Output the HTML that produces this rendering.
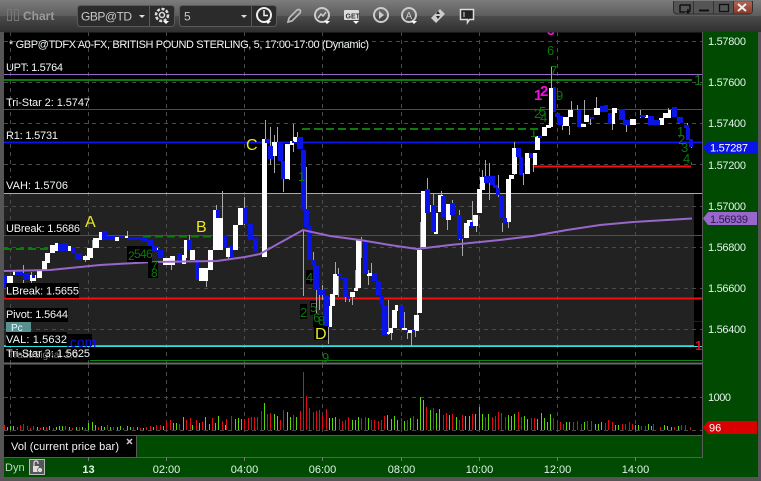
<!DOCTYPE html>
<html>
<head>
<meta charset="utf-8">
<title>Chart</title>
<style>
html,body{margin:0;padding:0;background:#555;width:761px;height:481px;overflow:hidden}
svg{display:block;position:absolute;left:0;top:0}
text{font-family:"Liberation Sans",sans-serif}
.l{font-size:11px;fill:#f2f6f6}
.a{font-size:11px;fill:#e2f4ea}
.y{font-size:16px;fill:#e8e820}
.g{font-size:13px;fill:#0a7a0a}
.m{font-size:14px;fill:#f010e0;font-weight:bold}
</style>
</head>
<body>
<svg width="761" height="481" viewBox="0 0 761 481" xmlns="http://www.w3.org/2000/svg">
<defs>
<linearGradient id="t1" x1="0" y1="0" x2="0" y2="1"><stop offset="0" stop-color="#7c7c7c"/><stop offset="1" stop-color="#5c5c5c"/></linearGradient>
<linearGradient id="t2" x1="0" y1="0" x2="0" y2="1"><stop offset="0" stop-color="#4c4c4c"/><stop offset="1" stop-color="#2f2f2f"/></linearGradient>
<linearGradient id="x" x1="0" y1="0" x2="0" y2="1"><stop offset="0" stop-color="#b5644f"/><stop offset="1" stop-color="#8a3a2a"/></linearGradient>
<clipPath id="pc"><rect x="4" y="32" width="698" height="331"/></clipPath>
</defs>

<rect width="761" height="481" fill="#555"/>
<rect width="761" height="16" fill="url(#t1)"/>
<rect y="16" width="761" height="16" fill="url(#t2)"/>

<!-- title -->
<rect x="7.5" y="9.5" width="4" height="11" fill="none" stroke="#777"/>
<rect x="14.5" y="9.5" width="4" height="11" fill="none" stroke="#777"/>
<text x="23" y="20" font-weight="bold" fill="#9a9a9a" style="font-size:12px">Chart</text>

<!-- symbol box -->
<rect x="77.5" y="5.5" width="97" height="21" rx="3" fill="#2b2b2b" stroke="#5a5a5a"/>
<path d="M149.500 6V26" stroke="#5a5a5a"/>
<text x="81" y="20.500" fill="#c8c8c8" style="font-size:12px" textLength="51">GBP@TD</text>
<path d="M139 15h6l-3 3z" fill="#ddd"/>
<g fill="none" stroke="#ddd">
<circle cx="162" cy="15" r="6" stroke-width="2.500" stroke-dasharray="3 1.600"/>
<circle cx="162" cy="15" r="2.500" stroke-width="1.500"/>
</g>
<path d="M163 21h6l-3 3z" fill="#fff"/>

<!-- interval box -->
<rect x="179.5" y="5.5" width="97" height="21" rx="3" fill="#2b2b2b" stroke="#5a5a5a"/>
<path d="M251.500 6V26" stroke="#5a5a5a"/>
<text x="184" y="20.500" fill="#c8c8c8" style="font-size:12px">5</text>
<path d="M241 15h6l-3 3z" fill="#ddd"/>
<circle cx="264" cy="15" r="7" fill="none" stroke="#eee" stroke-width="2"/>
<path d="M264 10v5.500h4" fill="none" stroke="#eee" stroke-width="1.500"/>
<path d="M265 21h6l-3 3z" fill="#fff"/>

<!-- tool icons -->
<path d="M288 22l1-4 8-8q2-1 3 0t0 3l-8 8z" fill="none" stroke="#bbb" stroke-width="1.700"/>
<circle cx="322" cy="15" r="7" fill="none" stroke="#ccc" stroke-width="2"/>
<path d="M318 18l3-4 2 2 3-4" fill="none" stroke="#ccc" stroke-width="1.500"/>
<path d="M324 21h6l-3 3z" fill="#fff"/>
<rect x="344" y="10" width="15" height="10" rx="1" fill="#ddd"/>
<text x="345.500" y="18.500" fill="#333" font-weight="bold" style="font-size:7px">GET</text>
<path d="M353 21h6l-3 3z" fill="#fff"/>
<circle cx="381" cy="15" r="7" fill="none" stroke="#ccc" stroke-width="2"/>
<path d="M379 11l5 4-5 4z" fill="#ccc"/>
<circle cx="409" cy="15" r="7" fill="none" stroke="#ccc" stroke-width="2"/>
<text x="405.500" y="19" fill="#ccc" style="font-size:10px">A</text>
<path d="M411 21h6l-3 3z" fill="#fff"/>
<path d="M431 18l9-9 5 5-9 9z" fill="#ccc"/>
<path d="M436 14l2-3 2 3zM436 16l2 3 2-3z" fill="#222"/>
<path d="M460.500 9.500h13v10h-4l-2 3v-3h-7z" fill="#222" stroke="#ddd" stroke-width="1.500"/>
<path d="M464 12v5" stroke="#ddd"/>

<!-- window buttons -->
<path d="M673.500 1v9q0 4 4 4h71q4 0 4-4V1" fill="#555" stroke="#2e2e2e"/>
<rect x="733" y="1.500" width="19" height="12" rx="2" fill="url(#x)"/>
<path d="M693.500 1v13M713.500 1v13M733.500 1v13" stroke="#333"/>
<path d="M680 5h10v5h-3M680 5v7h5" fill="none" stroke="#111" stroke-width="1.500"/>
<path d="M685 11h6l-3 3z" fill="#111"/>
<path d="M699 10.500h10" stroke="#111" stroke-width="2"/>
<rect x="719.500" y="4.500" width="9" height="7" fill="none" stroke="#111" stroke-width="1.300"/>
<path d="M738 4l8 7M746 4l-8 7" stroke="#eee" stroke-width="2"/>

<!-- plot background -->
<rect x="4" y="32" width="698" height="404" fill="#000"/>
<rect x="4" y="193" width="690" height="153" fill="#222"/>

<!-- axis -->
<rect x="703" y="32" width="55" height="445" fill="#014a01"/>
<rect x="4" y="436" width="754" height="41" fill="#014a01"/>
<path d="M702.500 32V457.500H4" fill="none" stroke="#5a5a5a"/>

<!-- grid -->
<g stroke="#4a4a4a" stroke-dasharray="4 4" fill="none">
<path d="M4 41.500H702M4 82.500H702M4 123.500H702M4 164.500H702M4 206.500H702M4 247.500H702M4 288.500H702M4 329.500H702M4 397.500H702M4 430.500H702"/>
<path d="M10.500 32V363M88.500 32V363M166.500 32V363M244.500 32V363M322.500 32V363M401.500 32V363M479.500 32V363M557.500 32V363M635.500 32V363"/>
<path d="M10.500 364V435M88.500 364V435M166.500 364V435M244.500 364V435M322.500 364V435M401.500 364V435M479.500 364V435M557.500 364V435M635.500 364V435"/>
</g>
<path d="M88.500 457v4M166.500 457v4M244.500 457v4M322.500 457v4M401.500 457v4M479.500 457v4M557.500 457v4M635.500 457v4" stroke="#777"/>

<!-- level lines -->
<path d="M4 74.500H702" stroke="#9966cc"/>
<path d="M4 80H692" stroke="#0c7a0c" stroke-width="2"/>
<path d="M4 109.500H702" stroke="#0c7a0c"/>
<path d="M4 142.500H702" stroke="#0a14e6" stroke-width="2"/>
<path d="M4 193.500H702" stroke="#30e0e0"/>
<path d="M4 235.500H702" stroke="#d01818"/>
<path d="M4 298.500H702" stroke="#f01010" stroke-width="2"/>
<path d="M4 321.500H702" stroke="#0a10b0"/>
<path d="M4 345.500H694" stroke="#d07070"/>
<path d="M4 346.500H702" stroke="#30e0e0"/>
<path d="M90 360.500H702" stroke="#0c8a0c"/>
<path d="M4 363.500H702" stroke="#666" stroke-width="2"/>
<path d="M302 129H540" stroke="#0c7a0c" stroke-width="2" stroke-dasharray="8 4"/>
<path d="M4 249H50" stroke="#0c7a0c" stroke-width="2" stroke-dasharray="8 4"/>
<path d="M143 236.500H213" stroke="#0c7a0c" stroke-width="2" stroke-dasharray="8 4"/>
<path d="M533 166.500H691" stroke="#f01010" stroke-width="2"/>
<path d="M691.500 165v-3" stroke="#f01010"/>

<!-- wicks -->
<path fill="none" stroke="#a8a8a8" d="M23.500 265V283M31.500 272V283M85.500 255V262M92.500 240V248M127.500 231V238M171.500 258V270M189.500 235V240M206.500 280V287M216.500 205V210M222.500 191V250M228.500 255V260M244.500 197V225M262.500 232V250M265.500 120V139M270.500 127V165M274.500 135V173M277.500 127V142M283.500 166V192M289.500 170V180M293.500 124V152M297.500 132V137M303.500 230V296M306.500 167V210M313.500 252V262M316.500 290V313M319.500 290V310M322.500 285V300M328.500 327V344M335.500 262V280M338.500 268V297M345.500 297V302M349.500 296V302M352.500 297V305M355.500 270V288M361.500 237V258M368.500 270V285M371.500 263V273M388.500 300V335M391.500 332V340M404.500 312V330M407.500 330V339M411.500 332V346M415.500 328V337M417.500 303V318M420.500 222V250M427.500 178V205M433.500 194V225M441.500 191V196M447.500 215V230M452.500 200V215M459.500 210V240M462.500 237V256M472.500 201V222M476.500 226V232M482.500 170V177M485.500 160V177M489.500 163V200M498.500 175V197M502.500 223V232M508.500 222V228M514.500 142V175M523.500 173V185M533.500 165V172M551.500 66V125M562.500 125V130M569.500 126V135M571.500 101V110M577.500 105V112M584.500 100V115M590.500 119V125M596.500 97V108M612.500 108V130M626.500 125V132M640.500 110V118M668.500 108V113M687.500 123V127M691.500 145V148"/>

<!-- white candles -->
<path fill="#fff" d="M7 276H13V287H7zM13 270H17V275H13zM30 275H36V281H30zM37 270H42V278H37zM42 261H47V270H42zM45 253H50V263H45zM50 245H55V253H50zM55 243H58V251H55zM68 246H71V251H68zM83 256H90V260H83zM87 248H93V258H87zM93 238H99V248H93zM99 232H102V240H99zM115 237H119V241H115zM125 236H128V238H125zM155 248H158V250H155zM163 258H170V265H163zM170 256H175V265H170zM182 255H186V264H182zM184 240H187V258H184zM190 250H195V260H190zM199 268H203V281H199zM203 268H208V281H203zM208 250H213V270H208zM213 210H218V250H213zM218 218H223V250H218zM226 248H230V257H226zM233 225H238V250H233zM238 208H243V225H238zM262 139H267V257H262zM272 142H277V156H272zM285 144H290V179H285zM290 141H294V145H290zM293 137H297V142H293zM327 306H332V327H327zM330 294H335V306H330zM333 274H338V295H333zM350 292H355V297H350zM354 288H358V291H354zM356 240H361V288H356zM367 273H372V276H367zM386 332H390V334H386zM389 328H393V333H389zM392 310H397V328H392zM395 305H398V311H395zM402 328H407V330H402zM408 330H412V333H408zM414 315H419V331H414zM417 250H422V313H417zM421 191H426V247H421zM428 205H433V212H428zM434 213H438V234H434zM438 195H443V212H438zM446 204H451V220H446zM464 223H469V238H464zM467 220H472V226H467zM473 215H478V226H473zM477 189H482V213H477zM480 177H485V190H480zM487 178H490V183H487zM506 179H511V222H506zM509 175H514V179H509zM512 148H517V174H512zM525 153H530V174H525zM533 153H537V165H533zM535 136H540V150H535zM542 127H547V136H542zM549 88H553V127H549zM546 125H551V128H546zM563 117H569V126H563zM568 110H573V117H568zM581 124H586V127H581zM584 115H589V122H584zM594 108H600V115H594zM612 112H615V124H612zM612 108H617V113H612zM630 119H636V125H630zM645 115H648V118H645zM659 118H664V125H659zM663 113H668V118H663zM668 110H671V118H668z"/>

<!-- blue candles -->
<path fill="#0a14e6" d="M4 275H7V287H4zM15 270H23V275H15zM23 273H30V280H23zM32 275H35V278H32zM58 244H63V251H58zM63 243H68V251H63zM71 247H75V253H71zM75 253H82V260H75zM102 231H107V240H102zM107 236H115V240H107zM119 236H124V238H119zM128 237H142V240H128zM142 238H148V241H142zM147 240H153V250H147zM152 246H157V251H152zM158 250H163V258H158zM177 253H182V264H177zM187 240H192V250H187zM195 260H199V280H195zM216 210H220V218H216zM223 235H227V248H223zM230 246H233V257H230zM243 208H247V224H243zM248 224H253V240H248zM253 238H258V252H253zM265 139H270V143H265zM268 146H273V159H268zM278 142H283V161H278zM281 161H285V179H281zM292 141H294V143H292zM297 137H303V149H297zM301 150H306V210H301zM304 209H309V227H304zM307 226H312V260H307zM311 260H316V265H311zM313 265H319V290H313zM317 290H325V295H317zM324 295H329V327H324zM337 274H342V276H337zM340 277H344V279H340zM343 278H348V297H343zM347 296H350V299H347zM363 240H368V274H363zM372 273H377V281H372zM376 281H381V295H376zM380 296H384V305H380zM382 305H387V335H382zM399 305H404V328H399zM406 330H408V332H406zM412 330H415V332H412zM425 189H430V213H425zM431 205H436V232H431zM441 196H446V217H441zM450 203H455V215H450zM457 215H462V239H457zM460 237H464V239H460zM470 222H473V227H470zM484 176H490V183H484zM490 176H495V185H490zM493 185H498V188H493zM496 188H500V195H496zM499 196H504V218H499zM503 218H507V223H503zM516 148H521V157H516zM519 157H523V175H519zM529 153H533V158H529zM538 136H542V138H538zM553 87H556V112H553zM555 113H560V117H555zM557 116H563V125H557zM577 110H581V127H577zM590 117H594V119H590zM600 106H604V112H600zM604 105H608V112H604zM608 113H612V124H608zM619 109H625V120H619zM623 120H630V125H623zM640 115H646V117H640zM648 116H654V125H648zM654 120H660V125H654zM672 107H677V117H672zM677 117H683V123H677zM684 125H689V128H684zM686 128H690V140H686zM689 139H693V147H689z"/>

<!-- moving average -->
<path fill="none" stroke="#9966cc" stroke-width="2" d="M4 271L50 270L100 265L153 262L217 261L245 257L260 254L267 250L285 240L303 230L330 236L360 240L390 245L417 249L450 245L480 242L500 240L533 236L567 230L600 225L633 222L692 218.500"/>

<!-- volume bars -->
<path fill="none" stroke="#e00c14" d="M4.500 430v-5M17.500 430v-3M20.500 430v-5M23.500 430v-6M27.500 430v-4M30.500 430v-2M33.500 430v-4M40.500 430v-2M46.500 430v-3M53.500 430v-2M65.500 430v-4M72.500 430v-2M79.500 430v-3M85.500 430v-2M98.500 430v-3M107.500 430v-5M113.500 430v-3M123.500 430v-2M133.500 430v-3M140.500 430v-2M146.500 430v-3M150.500 430v-4M156.500 430v-5M160.500 430v-5M166.500 430v-8M170.500 430v-10M179.500 430v-6M186.500 430v-10M190.500 430v-12M196.500 430v-10M202.500 430v-8M212.500 430v-12M222.500 430v-9M226.500 430v-11M231.500 430v-14M244.500 430v-11M248.500 430v-12M251.500 430v-13M254.500 430v-13M257.500 430v-13M261.500 430v-19M267.500 430v-16M270.500 430v-17M280.500 430v-10M283.500 430v-20M293.500 430v-15M300.500 430v-19M303.500 430v-58M306.500 430v-34M309.500 430v-22M313.500 430v-18M316.500 430v-19M319.500 430v-20M322.500 430v-14M326.500 430v-21M339.500 430v-11M342.500 430v-9M345.500 430v-10M348.500 430v-13M361.500 430v-12M365.500 430v-13M371.500 430v-10M374.500 430v-10M378.500 430v-9M381.500 430v-10M384.500 430v-14M401.500 430v-12M407.500 430v-10M413.500 430v-14M426.500 430v-23M433.500 430v-22M443.500 430v-15M446.500 430v-17M452.500 430v-16M459.500 430v-10M462.500 430v-15M472.500 430v-16M485.500 430v-13M492.500 430v-13M495.500 430v-14M498.500 430v-18M501.500 430v-17M505.500 430v-13M518.500 430v-18M521.500 430v-13M531.500 430v-12M534.500 430v-12M553.500 430v-12M557.500 430v-10M560.500 430v-8M563.500 430v-6M573.500 430v-8M577.500 430v-9M581.500 430v-6M587.500 430v-9M591.500 430v-9M605.500 430v-7M608.500 430v-10M612.500 430v-8M622.500 430v-6M625.500 430v-6M629.500 430v-8M632.500 430v-6M641.500 430v-4M645.500 430v-4M653.500 430v-6M660.500 430v-3M674.500 430v-3M681.500 430v-5M685.500 430v-5M690.500 430v-3"/>
<path fill="none" stroke="#58d808" d="M7.500 430v-3M10.500 430v-4M13.500 430v-4M37.500 430v-3M43.500 430v-3M49.500 430v-4M56.500 430v-3M59.500 430v-4M62.500 430v-4M69.500 430v-3M76.500 430v-3M82.500 430v-3M88.500 430v-7M92.500 430v-8M95.500 430v-5M101.500 430v-4M104.500 430v-3M110.500 430v-3M117.500 430v-3M120.500 430v-4M127.500 430v-4M130.500 430v-3M137.500 430v-3M143.500 430v-2M153.500 430v-3M163.500 430v-4M173.500 430v-7M176.500 430v-7M183.500 430v-13M192.500 430v-5M199.500 430v-7M205.500 430v-13M209.500 430v-6M215.500 430v-7M218.500 430v-14M225.500 430v-5M235.500 430v-11M238.500 430v-12M241.500 430v-11M264.500 430v-27M274.500 430v-16M277.500 430v-14M287.500 430v-18M290.500 430v-13M296.500 430v-13M329.500 430v-12M332.500 430v-12M335.500 430v-13M352.500 430v-10M355.500 430v-10M358.500 430v-13M368.500 430v-12M387.500 430v-15M391.500 430v-11M394.500 430v-14M397.500 430v-10M404.500 430v-9M410.500 430v-12M417.500 430v-11M420.500 430v-33M423.500 430v-30M430.500 430v-20M436.500 430v-17M439.500 430v-21M449.500 430v-15M456.500 430v-13M465.500 430v-14M469.500 430v-14M475.500 430v-16M479.500 430v-23M482.500 430v-16M488.500 430v-16M508.500 430v-15M511.500 430v-14M514.500 430v-16M524.500 430v-14M527.500 430v-11M537.500 430v-11M541.500 430v-17M544.500 430v-12M547.500 430v-8M550.500 430v-16M566.500 430v-8M569.500 430v-8M584.500 430v-8M595.500 430v-6M598.500 430v-6M601.500 430v-8M615.500 430v-5M618.500 430v-5M635.500 430v-5M638.500 430v-5M648.500 430v-6M651.500 430v-4M664.500 430v-5M667.500 430v-4M671.500 430v-3M678.500 430v-4"/>

<path d="M4 435.500H702" stroke="#5a5a5a"/>

<!-- vol tab -->
<rect x="4" y="436" width="132" height="21" fill="#000"/>
<path d="M136.500 436V457" stroke="#5a5a5a"/>
<text x="11" y="450" class="l" textLength="108">Vol (current price bar)</text>
<path d="M127 439l5 5M132 439l-5 5" stroke="#ccc" stroke-width="1.500"/>

<!-- labels -->
<text x="9" y="48" class="l" textLength="360" lengthAdjust="spacing">* GBP@TDFX A0-FX, BRITISH POUND STERLING, 5, 17:00-17:00 (Dynamic)</text>
<text x="6" y="71" class="l" textLength="57">UPT: 1.5764</text>
<text x="6" y="106" class="l" textLength="84">Tri-Star 2: 1.5747</text>
<text x="6" y="139" class="l" textLength="52">R1: 1.5731</text>
<rect x="6" y="178" width="62" height="15" fill="#000"/>
<text x="6" y="189" class="l" textLength="62">VAH: 1.5706</text>
<rect x="6" y="221" width="74" height="14" fill="#000"/>
<text x="6" y="232" class="l" textLength="74">UBreak: 1.5686</text>
<rect x="6" y="283" width="73" height="15" fill="#000"/>
<text x="6" y="294.500" class="l" textLength="73">LBreak: 1.5655</text>
<rect x="6" y="308" width="62" height="14" fill="#000"/>
<text x="6" y="318" class="l" textLength="62">Pivot: 1.5644</text>
<rect x="6" y="322" width="25" height="10" fill="#5a9090"/>
<text x="11" y="331" fill="#dff" style="font-size:10px">Pc</text>
<rect x="6" y="332" width="61" height="14" fill="#000"/>
<rect x="67" y="334" width="25" height="12" fill="#000"/>
<text x="66" y="347" fill="#1010ee" style="font-size:14px">.com</text>
<text x="6" y="343" class="l" textLength="61">VAL: 1.5632</text>
<rect x="6" y="348" width="84" height="12" fill="#000"/>
<text x="8" y="358" fill="#777" style="font-size:10px">TradeSignal 2.0</text>
<text x="6" y="357" class="l" textLength="84">Tri-Star 3: 1.5625</text>

<text x="85" y="227" class="y">A</text>
<text x="196" y="232" class="y">B</text>
<text x="246" y="150" class="y">C</text>
<rect x="314" y="326" width="14" height="14" fill="#000"/>
<text x="315" y="339" class="y">D</text>

<!-- green counts -->
<rect x="127" y="246" width="25" height="16" fill="#000"/>
<rect x="148" y="262" width="10" height="16" fill="#000"/>
<text x="128" y="260" class="g" style="font-size:12px">2</text><text x="134" y="258" class="g" style="font-size:12px">5</text><text x="140" y="258" class="g" style="font-size:12px">4</text><text x="146" y="258" class="g" style="font-size:12px">6</text>
<text x="151" y="270" class="g" style="font-size:12px">7</text><text x="151" y="277" class="g" style="font-size:12px">8</text>
<text x="298" y="181" class="g">1</text>
<rect x="306" y="270" width="7" height="14" fill="#000"/>
<text x="306" y="282" class="g">4</text>
<rect x="300" y="304" width="7" height="15" fill="#000"/>
<text x="300" y="317" class="g">2</text>
<rect x="310" y="301" width="6" height="14" fill="#000"/>
<text x="310" y="312" class="g">5</text>
<rect x="313" y="315" width="10" height="12" fill="#000"/>
<text x="313" y="322" class="g">6</text><text x="318" y="325" class="g">8</text>
<text x="322" y="362" class="g">9</text>
<text x="547" y="55" class="g">6</text>
<text x="550" y="75" class="g">7</text>
<text x="556" y="100" class="g">9</text>
<text x="694" y="85" class="g" style="font-size:15px">1</text>
<text x="534" y="118" class="g">2</text><text x="539" y="116" class="g">5</text><text x="540" y="122" class="g">4</text>
<text x="530" y="137" class="g">1</text>
<text x="677" y="136" class="g">1</text>
<text x="678" y="144" class="g">2</text>
<text x="681" y="152" class="g">3</text>
<text x="683" y="163" class="g">4</text>
<text x="695" y="350" fill="#e01010" font-weight="bold" style="font-size:13px">1</text>
<text x="534" y="100" class="m" style="font-size:15px">1</text>
<text x="540" y="96" class="m" style="font-size:15px">2</text>
<g clip-path="url(#pc)"><text x="547" y="35" class="m">3</text></g>

<path d="M4 32H702" stroke="#2f2f2f"/>

<!-- axis labels -->
<text x="708" y="45" class="a" textLength="38">1.57800</text>
<text x="708" y="86" class="a" textLength="38">1.57600</text>
<text x="708" y="127" class="a" textLength="38">1.57400</text>
<text x="708" y="169" class="a" textLength="38">1.57200</text>
<text x="708" y="210" class="a" textLength="38">1.57000</text>
<text x="708" y="251" class="a" textLength="38">1.56800</text>
<text x="708" y="292" class="a" textLength="38">1.56600</text>
<text x="708" y="333" class="a" textLength="38">1.56400</text>
<text x="708" y="401" class="a" textLength="23">1000</text>

<!-- tags -->
<path d="M703 147.500L708 142H757V154H708z" fill="#0a14e6"/>
<text x="710" y="151.500" style="font-size:11px" fill="#fff" textLength="38">1.57287</text>
<path d="M703 218.500L708 212H757V225H708z" fill="#9966cc"/>
<text x="710" y="223" style="font-size:11px" fill="#2a1a4a" textLength="38">1.56939</text>
<path d="M703 427.500L708 421H757V434H708z" fill="#d80000"/>
<text x="709" y="431.500" style="font-size:11px" fill="#fff">96</text>

<!-- bottom axis -->
<text x="5" y="471" fill="#bcd8c8" style="font-size:11px">Dyn</text>
<rect x="29.500" y="459.500" width="15" height="15" fill="#555" stroke="#bbb"/>
<path d="M34 466v-3q0-2 2-2t2 2v1" fill="none" stroke="#ddd" stroke-width="1.200"/>
<rect x="33" y="466" width="6" height="6" fill="#ddd"/>
<circle cx="40" cy="470" r="2.500" fill="#ddd" stroke="#555" stroke-width=".7"/>
<text x="88.500" y="473" class="a" text-anchor="middle" font-weight="bold">13</text>
<text x="166.500" y="473" class="a" text-anchor="middle">02:00</text>
<text x="244.500" y="473" class="a" text-anchor="middle">04:00</text>
<text x="322.500" y="473" class="a" text-anchor="middle">06:00</text>
<text x="401.500" y="473" class="a" text-anchor="middle">08:00</text>
<text x="479.500" y="473" class="a" text-anchor="middle">10:00</text>
<text x="557.500" y="473" class="a" text-anchor="middle">12:00</text>
<text x="635.500" y="473" class="a" text-anchor="middle">14:00</text>
</svg>
</body>
</html>
